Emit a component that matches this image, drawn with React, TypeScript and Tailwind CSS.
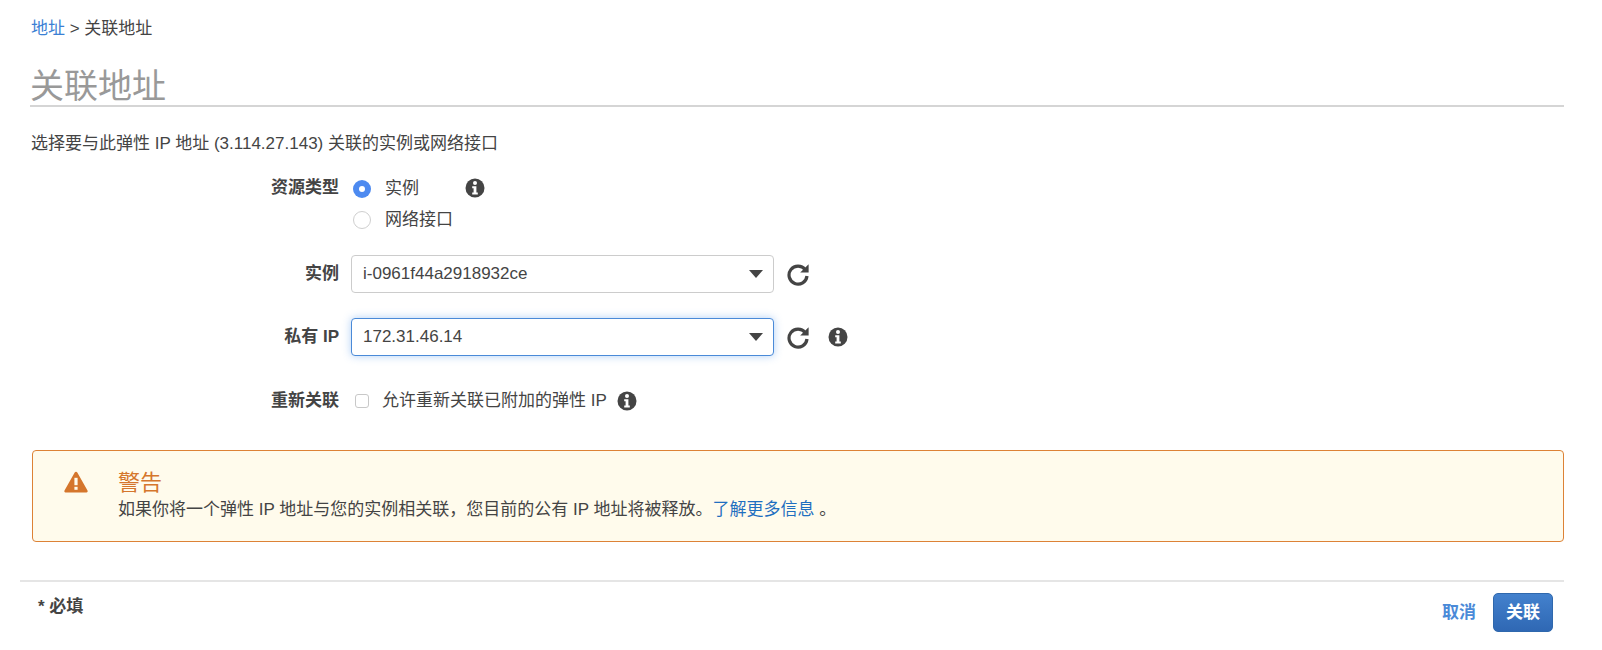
import React from "react";

function Info({ className = "" }: { className?: string }) {
  return (
    <svg viewBox="0 0 20 20" className={"w-[20px] h-[20px] shrink-0 " + className}>
      <circle cx="10" cy="10" r="9.5" fill="#444" />
      <circle cx="10" cy="5" r="2" fill="#fff" />
      <path d="M7.2 8.2h4.2v6.2h1.4v2H7.2v-2h1.4v-4.2H7.2z" fill="#fff" />
    </svg>
  );
}

function Refresh() {
  return (
    <svg viewBox="0 0 24 24" className="w-[24px] h-[24px] shrink-0">
      <path d="M19.2 7.6A9 9 0 1 0 21 14" fill="none" stroke="#444" strokeWidth="3.2" />
      <path d="M22.6 2.2v8.4h-8.4z" fill="#444" />
    </svg>
  );
}

function Select({ value, focus }: { value: string; focus?: boolean }) {
  return (
    <div
      className={
        "w-[423px] h-[38px] rounded-[4px] border flex items-center justify-between pl-[11px] pr-[10px] text-[17px] text-[#444] bg-white " +
        (focus ? "border-[#4a8ad8] shadow-[0_0_8px_rgba(82,150,236,0.45)]" : "border-[#cccccc]")
      }
    >
      <span>{value}</span>
      <svg viewBox="0 0 14 8" className="w-[14px] h-[8px]">
        <path d="M0 0h14L7 8z" fill="#444" />
      </svg>
    </div>
  );
}

function Label({ children }: { children: React.ReactNode }) {
  return <div className="w-[339px] shrink-0 text-right font-bold text-[17px] text-[#444]">{children}</div>;
}

export default function App() {
  return (
    <div className="w-[1602px] h-[650px] overflow-hidden bg-white text-[#444] text-[17px] leading-[20px] font-['Liberation_Sans','Noto_Sans_CJK_SC',sans-serif]">
      <div className="pl-[31px] pt-[19px] leading-[20px]">
        <span className="text-[#3b7fd4]">地址</span> &gt; 关联地址
      </div>
      <div className="ml-[30px] mr-[38px] mt-[19px] h-[49px] border-b-2 border-[#d5d5d5] pt-[8px] text-[34px] leading-[40px] text-[#999999]">
        关联地址
      </div>
      <div className="pl-[31px] mt-[27px] leading-[20px]">
        选择要与此弹性 IP 地址 (3.114.27.143) 关联的实例或网络接口
      </div>

      <div className="mt-[25px] flex items-start h-[58px]">
        <div className="mt-[-1px]"><Label>资源类型</Label></div>
        <div className="ml-[14px] flex flex-col gap-[11px]">
          <div className="flex items-center h-[20px]">
            <div className="w-[18px] h-[18px] rounded-full bg-[#4d8af0] flex items-center justify-center">
              <div className="w-[6px] h-[6px] rounded-full bg-white" />
            </div>
            <span className="ml-[14px]">实例</span>
            <Info className="ml-[46px] -translate-y-[1px]" />
          </div>
          <div className="flex items-center h-[20px]">
            <div className="w-[18px] h-[18px] rounded-full border border-[#cfcfcf] bg-white" />
            <span className="ml-[14px]">网络接口</span>
          </div>
        </div>
      </div>

      <div className="mt-[18px] flex items-center h-[38px]">
        <Label>实例</Label>
        <div className="ml-[12px]"><Select value="i-0961f44a2918932ce" /></div>
        <div className="ml-[12px]"><Refresh /></div>
      </div>

      <div className="mt-[25px] flex items-center h-[38px]">
        <Label>私有 IP</Label>
        <div className="ml-[12px]"><Select value="172.31.46.14" focus /></div>
        <div className="ml-[12px]"><Refresh /></div>
        <Info className="ml-[18px]" />
      </div>

      <div className="mt-[35px] flex items-center h-[20px]">
        <Label>重新关联</Label>
        <div className="ml-[16px] w-[14px] h-[14px] rounded-[3px] border border-[#c8c8c8] bg-white" />
        <span className="ml-[13px]">允许重新关联已附加的弹性 IP</span>
        <Info className="ml-[10px]" />
      </div>

      <div className="ml-[32px] mr-[38px] mt-[39px] h-[92px] rounded-[4px] border border-[#dd8236] bg-[#fffbec] flex">
        <div className="w-[85px] shrink-0 pl-[31px] pt-[20px]">
          <svg viewBox="0 0 24 22" className="w-[24px] h-[22px]">
            <path d="M12 .8c.6 0 1 .3 1.3.8l10.2 18c.5.9 0 1.8-1 1.8H1.500c-1 0-1.500-.9-1-1.800l10.200-18c.3-.5.700-.8 1.300-.8z" fill="#d5762c" />
            <rect x="10.400" y="6.800" width="3.200" height="7.400" fill="#fffbec" />
            <rect x="10.400" y="15.800" width="3.200" height="3" fill="#fffbec" />
          </svg>
        </div>
        <div className="pt-[19px]">
          <div className="text-[22px] leading-[25px] text-[#d5762c]">警告</div>
          <div className="mt-[4px] leading-[22px]">
            如果你将一个弹性 IP 地址与您的实例相关联，您目前的公有 IP 地址将被释放。<span className="text-[#1f6fc0]">了解更多信息</span> 。
          </div>
        </div>
      </div>

      <div className="ml-[20px] mr-[38px] mt-[38px] border-t-2 border-[#e5e5e5] flex justify-between">
        <div className="ml-[18px] mt-[15px] font-bold">* 必填</div>
        <div className="flex items-center mt-[11px] mr-[11px]">
          <span className="font-bold text-[#4a8ad8]">取消</span>
          <div className="ml-[17px] w-[60px] h-[39px] rounded-[5px] border border-[#2f68ad] bg-gradient-to-b from-[#4381cd] to-[#2f68b4] text-white font-bold flex items-center justify-center">
            关联
          </div>
        </div>
      </div>
    </div>
  );
}
